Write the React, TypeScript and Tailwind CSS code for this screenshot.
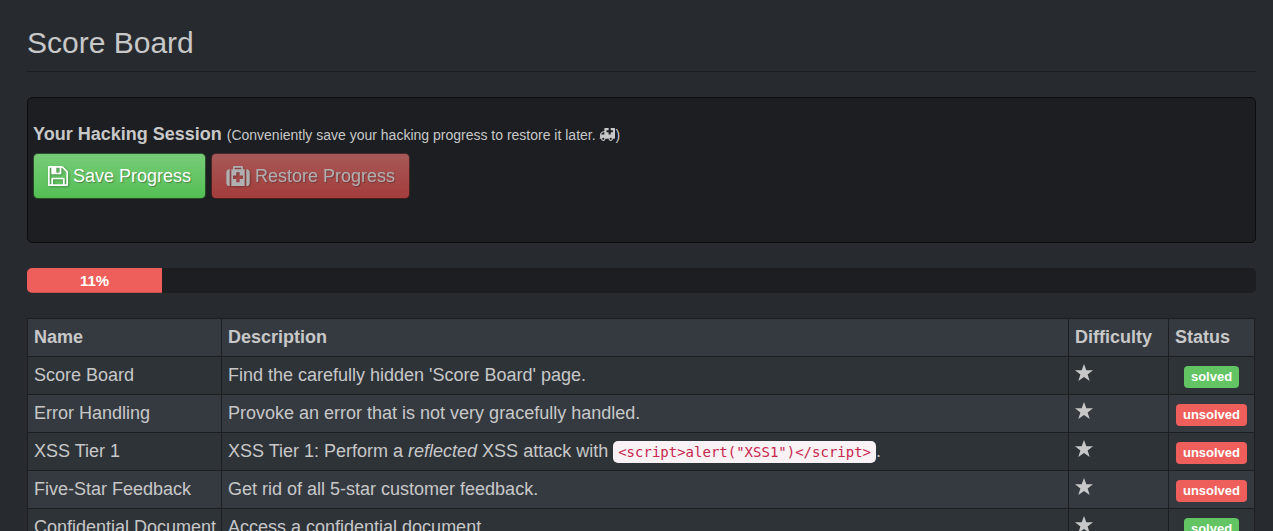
import type { ReactNode } from "react";

type Challenge = {
  name: string;
  description: ReactNode;
  difficulty: number;
  solved: boolean;
};

const challenges: Challenge[] = [
  {
    name: "Score Board",
    description: "Find the carefully hidden 'Score Board' page.",
    difficulty: 1,
    solved: true,
  },
  {
    name: "Error Handling",
    description: "Provoke an error that is not very gracefully handled.",
    difficulty: 1,
    solved: false,
  },
  {
    name: "XSS Tier 1",
    description: (
      <>
        XSS Tier 1: Perform a <em>reflected</em> XSS attack with{" "}
        <code className="rounded-[5px] bg-[#f9f2f4] px-[5px] py-[3px] font-['DejaVu_Sans_Mono',monospace] text-[14px] leading-none text-[#c7254e]">
          {'<script>alert("XSS1")</script>'}
        </code>
        .
      </>
    ),
    difficulty: 1,
    solved: false,
  },
  {
    name: "Five-Star Feedback",
    description: "Get rid of all 5-star customer feedback.",
    difficulty: 1,
    solved: false,
  },
  {
    name: "Confidential Document",
    description: "Access a confidential document.",
    difficulty: 1,
    solved: true,
  },
];

function FloppyIcon() {
  return (
    <svg
      viewBox="128 128 1536 1536"
      className="h-5 w-5 shrink-0 fill-current drop-shadow-[1px_1px_1px_rgba(0,0,0,0.3)]"
      aria-hidden="true"
    >
      <path d="M512 1536h768v-384h-768v384zm896 0h128v-896q0-14-10-38.5t-20-34.5l-281-281q-10-10-34-20t-39-10v416q0 40-28 68t-68 28h-576q-40 0-68-28t-28-68v-416h-128v1280h128v-416q0-40 28-68t68-28h832q40 0 68 28t28 68v416zm-384-928v-320q0-13-9.5-22.5t-22.5-9.5h-192q-13 0-22.5 9.5t-9.5 22.5v320q0 13 9.5 22.5t22.5 9.5h192q13 0 22.5-9.5t9.5-22.5zm640 32v928q0 40-28 68t-68 28h-1344q-40 0-68-28t-28-68v-1344q0-40 28-68t68-28h928q40 0 88 20t76 48l280 280q28 28 48 76t20 88z" />
    </svg>
  );
}

function MedkitIcon() {
  return (
    <svg
      viewBox="0 128 1792 1536"
      className="h-5 w-6 shrink-0 fill-current drop-shadow-[1px_1px_1px_rgba(0,0,0,0.3)]"
      aria-hidden="true"
    >
      <path d="M1280 1088v-192q0-14-9-23t-23-9h-224v-224q0-14-9-23t-23-9h-192q-14 0-23 9t-9 23v224h-224q-14 0-23 9t-9 23v192q0 14 9 23t23 9h224v224q0 14 9 23t23 9h192q14 0 23-9t9-23v-224h224q14 0 23-9t9-23zm-640-704h512v-128h-512v128zm-384 0v1280h-32q-92 0-158-66t-66-158v-832q0-92 66-158t158-66h32zm1152 0v1280h-1024v-1280h128v-160q0-40 28-68t68-28h576q40 0 68 28t28 68v160h128zm384 224v832q0 92-66 158t-158 66h-32v-1280h32q92 0 158 66t66 158z" />
    </svg>
  );
}

function AmbulanceIcon() {
  return (
    <svg
      viewBox="0 128 1920 1536"
      className="inline-block h-[13px] w-4 fill-current align-[-1px]"
      aria-hidden="true"
    >
      <path d="M640 1408q0-52-38-90t-90-38-90 38-38 90 38 90 90 38 90-38 38-90zm-384-512h384v-256h-158q-14 0-22 9l-195 195q-9 8-9 22v30zm1280 512q0-52-38-90t-90-38-90 38-38 90 38 90 90 38 90-38 38-90zm128-800v-192q0-14-9-23t-23-9h-224v-224q0-14-9-23t-23-9h-192q-14 0-23 9t-9 23v224h-224q-14 0-23 9t-9 23v192q0 14 9 23t23 9h224v224q0 14 9 23t23 9h192q14 0 23-9t9-23v-224h224q14 0 23-9t9-23zm256-416v1152q0 26-19 45t-45 19h-192q0 106-75 181t-181 75-181-75-75-181h-384q0 106-75 181t-181 75-181-75-75-181h-128q-26 0-45-19t-19-45 19-45 45-19v-416q0-26 13-58t32-51l198-198q19-19 51-32t58-13h160v-320q0-26 19-45t45-19h1152q26 0 45 19t19 45z" />
    </svg>
  );
}

function StarIcon() {
  return (
    <svg viewBox="0 0 18 17" className="h-[17px] w-[18px] fill-current" aria-hidden="true">
      <path d="M9 0l2.300 6.200H18l-5.400 4.200 2.100 6.600L9 13.100 3.300 17l2.100-6.600L0 6.200h6.700z" />
    </svg>
  );
}

function StatusLabel({ solved }: { solved: boolean }) {
  const color = solved ? "bg-[#62c462]" : "bg-[#ee5f5b]";
  return (
    <span
      className={`block rounded-[4px] px-[7px] text-[13px] leading-[22px] font-bold text-white ${color}`}
    >
      {solved ? "solved" : "unsolved"}
    </span>
  );
}

function ProgressBar({ value }: { value: number }) {
  return (
    <div
      role="progressbar"
      aria-label="Solved challenges"
      aria-valuenow={value}
      aria-valuemin={0}
      aria-valuemax={100}
      className="mt-[25px] h-[25px] overflow-hidden rounded-[5px] bg-[#1c1e22]"
    >
      <div
        className="h-full bg-[#ee5f5b] text-center text-[15px] leading-[25px] font-bold text-white shadow-[inset_0_-1px_0_rgba(0,0,0,0.15)]"
        style={{ width: `${value}%` }}
      >
        {value}%
      </div>
    </div>
  );
}

const cell = "border border-[#1c1e22] px-[6px] py-[6px] whitespace-nowrap";
const button =
  "flex items-center gap-[5px] rounded-[5px] border border-black/60 bg-origin-border px-[14px] py-[10px] leading-6 text-white [text-shadow:1px_1px_1px_rgba(0,0,0,0.3)]";

export default function App() {
  return (
    <main className="min-h-screen bg-[#272b30] pt-[25px] pr-[17px] pl-[27px] font-['Liberation_Sans',Arial,sans-serif] text-[18px] leading-[25px] text-[#c8c8c8]">
      <h1 className="border-b border-[#1c1e22] pb-[10px] text-[30px] leading-9">Score Board</h1>

      <section className="mt-[25px] rounded-[5px] border border-[#0c0d0e] bg-[#1c1e22] px-[5px] pt-6 pb-[43px] shadow-[inset_0_1px_1px_rgba(0,0,0,0.05)]">
        <h2 className="mb-[5px]">
          <strong>Your Hacking Session</strong>{" "}
          <small className="text-[14px]">
            (Conveniently save your hacking progress to restore it later. <AmbulanceIcon />)
          </small>
        </h2>
        <div className="flex gap-[5px]">
          <button
            type="button"
            className={`${button} bg-[linear-gradient(#78cc78,#62c462_60%,#53be53)]`}
          >
            <FloppyIcon />
            Save Progress
          </button>
          <button
            type="button"
            disabled
            className={`${button} bg-[linear-gradient(#f17a77,#ee5f5b_60%,#ec4d49)] opacity-65`}
          >
            <MedkitIcon />
            Restore Progress
          </button>
        </div>
      </section>

      <ProgressBar value={11} />

      <div className="mt-[25px] pr-px">
        <table className="w-full table-fixed border-collapse text-left">
          <colgroup>
            <col className="w-[194px]" />
            <col />
            <col className="w-[100px]" />
            <col className="w-[86px]" />
          </colgroup>
          <thead>
            <tr className="bg-[#353a41]">
              <th className={cell}>Name</th>
              <th className={cell}>Description</th>
              <th className={cell}>Difficulty</th>
              <th className={cell}>Status</th>
            </tr>
          </thead>
          <tbody>
            {challenges.map((c) => (
              <tr key={c.name} className="odd:bg-[#2e3338] even:bg-[#353a41]">
                <td className={cell}>{c.name}</td>
                <td className={cell}>{c.description}</td>
                <td className={cell}>
                  <div
                    role="img"
                    aria-label={`Difficulty ${c.difficulty}`}
                    className="flex h-[25px] items-start pt-px"
                  >
                    {Array.from({ length: c.difficulty }, (_, i) => (
                      <StarIcon key={i} />
                    ))}
                  </div>
                </td>
                <td className={cell}>
                  <div className="flex h-[25px] items-end justify-center">
                    <StatusLabel solved={c.solved} />
                  </div>
                </td>
              </tr>
            ))}
          </tbody>
        </table>
      </div>
    </main>
  );
}
